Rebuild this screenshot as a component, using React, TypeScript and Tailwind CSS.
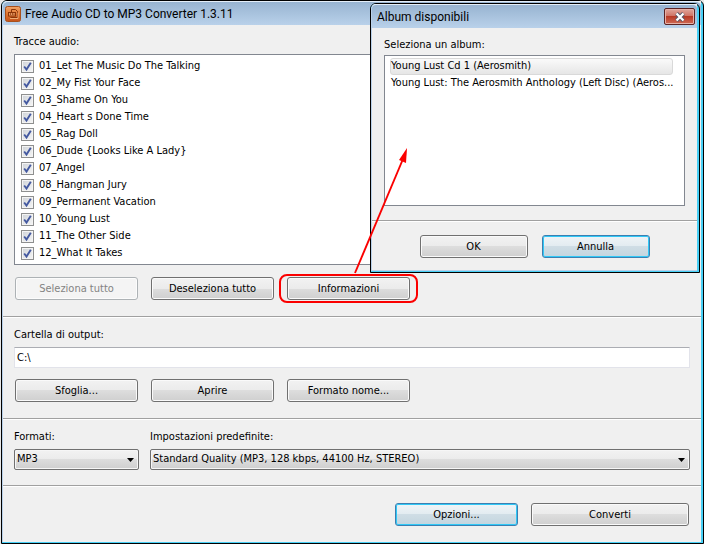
import React from 'react';

const tracks = [
    '01_Let The Music Do The Talking',
    '02_My Fist Your Face',
    '03_Shame On You',
    '04_Heart s Done Time',
    '05_Rag Doll',
    '06_Dude {Looks Like A Lady}',
    '07_Angel',
    '08_Hangman Jury',
    '09_Permanent Vacation',
    '10_Young Lust',
    '11_The Other Side',
    '12_What It Takes',
];

const albums = [
    'Young Lust Cd 1 (Aerosmith)',
    'Young Lust: The Aerosmith Anthology (Left Disc) (Aeros...',
];

interface ButtonProps {
    children: React.ReactNode;
    className: string;
    disabled?: boolean;
    highlighted?: boolean;
}

const Button: React.FC<ButtonProps> = ({ children, className, disabled, highlighted }) => {
    let look = 'border-[#707070] text-black inset-ring inset-ring-[#fafafa] bg-[linear-gradient(#f2f2f2,#ebebeb_50%,#dddddd_50%,#cfcfcf)]';
    if (disabled) look = 'border-[#adb2b5] text-[#838383] inset-ring inset-ring-[#fcfcfc] bg-[#f4f4f4]';
    if (highlighted) look = 'border-[#3c7fb1] text-black inset-ring inset-ring-[#30c8f6] bg-[linear-gradient(#eff4f7,#e2ebf0_50%,#cfdde5_50%,#c3d5df)]';
    return (
        <button type="button" disabled={disabled} className={`h-[23px] rounded-[3px] border text-center leading-4 ${look} ${className}`}>
            {children}
        </button>
    );
};

const Separator = () => <div className="h-[2px] border-t border-[#a0a0a0] bg-white" />;

interface SelectProps {
    id: string;
    label: string;
    option: string;
    className: string;
}

const Select: React.FC<SelectProps> = ({ id, label, option, className }) => (
    <div className={className}>
        <label htmlFor={id} className="block leading-4">{label}</label>
        <div className="relative mt-1">
            <select id={id} className="block h-[21px] w-full appearance-none rounded-[2px] border border-[#707070] bg-[linear-gradient(#f2f2f2,#ebebeb_50%,#dddddd_50%,#cfcfcf)] pr-4 pl-[2px] inset-ring inset-ring-[#f6f6f6]">
                <option>{option}</option>
            </select>
            <svg viewBox="0 0 7 4" className="pointer-events-none absolute top-[9px] right-[5px] h-1 w-[7px]">
                <path d="M0 0h7L3.5 4z" fill="#000" />
            </svg>
        </div>
    </div>
);

const AppIcon = () => (
    <svg viewBox="0 0 16 16" className="size-4">
        <defs>
            <linearGradient id="icon-fill" x1="0" y1="0" x2="0" y2="1">
                <stop offset="0" stopColor="#f3a86c" />
                <stop offset="0.5" stopColor="#df7430" />
                <stop offset="1" stopColor="#c4521a" />
            </linearGradient>
        </defs>
        <rect x="0.5" y="0.5" width="15" height="15" rx="2" fill="url(#icon-fill)" stroke="#a8501c" />
        <path d="M6.500 6V3.500h4l2 2v6h-7" fill="none" stroke="#8a3509" />
        <rect x="3.500" y="6.500" width="7" height="3.500" fill="#e89a62" stroke="#8a3509" />
        <path d="M5.500 7v2M7.500 7v2M9 7.500v1.500" fill="none" stroke="#8a3509" strokeWidth="0.7" />
        <path d="M5 12.500h8v-6" fill="none" stroke="#f8c08a" strokeWidth="0.8" />
    </svg>
);

const TrackRow: React.FC<{ name: string }> = ({ name }) => (
    <li>
        <label className="flex h-[17px] items-center gap-[5px]">
            <span className="relative size-[13px]">
                <input type="checkbox" defaultChecked className="peer block size-[13px] appearance-none border border-[#8e8f8f] bg-[linear-gradient(135deg,#cfd3d8,#f6f6f6)] inset-ring inset-ring-[#f4f4f4]" />
                <svg viewBox="0 0 13 13" className="pointer-events-none absolute inset-0 hidden size-[13px] peer-checked:block">
                    <path d="M3.200 6.500L5.500 9.500L9.800 2.800" fill="none" stroke="#4459a0" strokeWidth="1.9" />
                </svg>
            </span>
            {name}
        </label>
    </li>
);

const AlbumDialog = () => (
    <section role="dialog" aria-labelledby="album-title" className="absolute top-[2px] right-[3px] z-10 w-[330px] rounded-t-md border border-black bg-[#48d0f6]">
        <div className="mr-[2px] mb-px rounded-tl-[5px] border-b border-l border-[#b9d1ea] bg-[#f0f0f0]">
            <header className="flex h-6 items-center justify-between rounded-t-[4px] border-t border-[#e4eef8] bg-linear-to-b from-[#98b4d1] to-[#b9d1ea] pr-[2px] pl-[5px]">
                <h2 id="album-title" className="font-['Roboto',sans-serif] text-[12px] leading-4">Album disponibili</h2>
                <button type="button" aria-label="Chiudi" className="flex h-[17px] w-[31px] items-center justify-center rounded-[2px] border border-[#5c2323] bg-[linear-gradient(#e0a69c,#cf7263_48%,#b83a26_50%,#cf6a55)] inset-ring inset-ring-[#e6b1a7]">
                    <svg viewBox="0 0 12 10" className="h-[10px] w-3">
                        <path d="M2.500 1.500L9.500 8.500M9.500 1.500L2.500 8.500" stroke="#53586a" strokeWidth="4" />
                        <path d="M2.500 1.500L9.500 8.500M9.500 1.500L2.500 8.500" stroke="#fff" strokeWidth="2.300" />
                    </svg>
                </button>
            </header>
            <div className="px-3 pt-[9px] pb-[14px]">
                <p id="album-label" className="leading-4">Seleziona un album:</p>
                <ul role="listbox" aria-labelledby="album-label" className="mt-[2px] h-[151px] border border-[#828790] bg-white py-[2px] pr-[11px] pl-[5px]">
                    {albums.map((album, i) => (
                        <li
                            key={album}
                            role="option"
                            aria-selected={i === 0}
                            className="flex h-[17px] items-center rounded-[3px] border border-transparent whitespace-nowrap aria-selected:border-[#d9d9d9] aria-selected:bg-linear-to-b aria-selected:from-[#fafafa] aria-selected:to-[#e6e6e6]"
                        >
                            {album}
                        </li>
                    ))}
                </ul>
            </div>
            <Separator />
            <footer className="flex justify-center gap-[14px] pt-[13px] pb-3">
                <Button className="w-[108px]">OK</Button>
                <Button className="w-[108px]" highlighted>Annulla</Button>
            </footer>
        </div>
    </section>
);

// Red frame and arrow that lead from the button to the dialog
const Callout = () => (
    <>
        <span className="pointer-events-none absolute -inset-x-2 -inset-y-[3px] rounded-lg border-2 border-[#fb0000]" />
        <svg viewBox="0 0 60 130" className="pointer-events-none absolute bottom-[25px] left-[65px] h-[130px] w-[60px]">
            <path d="M3 128L51 14" stroke="#fb0000" strokeWidth="1.900" />
            <path d="M55 3L47 15L54 18z" fill="#fb0000" />
        </svg>
    </>
);

export default function App() {
    return (
        <div className="min-h-screen bg-[#e8e8e8] pl-px font-['DejaVu_Sans_Condensed','DejaVu_Sans',sans-serif] text-[11px] text-black">
            <main className="relative flex min-h-screen flex-col rounded-t-md border border-black bg-[#48d0f6] pr-[2px] pb-px">
                <div className="flex grow flex-col rounded-tl-[5px] border-l border-[#b9d1ea] bg-[#f0f0f0]">
                    <header className="flex h-6 items-center gap-1 rounded-t-[5px] border-t border-[#e4eef8] bg-linear-to-b from-[#98b4d1] to-[#b9d1ea] pl-[2px]">
                        <AppIcon />
                        <h1 className="font-['Roboto',sans-serif] text-[12px] leading-4">Free Audio CD to MP3 Converter 1.3.11</h1>
                    </header>

                    <section className="px-[11px] pt-[9px] pb-4">
                        <h2 className="leading-4">Tracce audio:</h2>
                        <ul className="mt-1 border border-[#828790] bg-white pt-[3px] pb-[2px] pl-[6px]">
                            {tracks.map(t => <TrackRow key={t} name={t} />)}
                        </ul>
                        <div className="mt-3 flex gap-[13px] pl-px">
                            <Button className="w-[123px]" disabled>Seleziona tutto</Button>
                            <Button className="w-[123px]">Deseleziona tutto</Button>
                            <div className="relative z-20">
                                <Button className="w-[123px]">Informazioni</Button>
                                <Callout />
                            </div>
                        </div>
                    </section>
                    <Separator />

                    <section className="px-[11px] pt-[9px] pb-4">
                        <label htmlFor="output-folder" className="block leading-4">Cartella di output:</label>
                        <input id="output-folder" type="text" defaultValue="C:\" className="mt-1 block h-[21px] w-full border border-[#e2e3ea] border-t-[#abadb3] bg-white px-[2px]" />
                        <div className="mt-[11px] flex gap-[13px] pl-px">
                            <Button className="w-[123px]">Sfoglia...</Button>
                            <Button className="w-[123px]">Aprire</Button>
                            <Button className="w-[123px]">Formato nome...</Button>
                        </div>
                    </section>
                    <Separator />

                    <section className="flex gap-[11px] px-[11px] pt-[9px] pb-[15px]">
                        <Select id="format" label="Formati:" option="MP3" className="w-[125px]" />
                        <Select id="preset" label="Impostazioni predefinite:" option="Standard Quality (MP3, 128 kbps, 44100 Hz, STEREO)" className="grow" />
                    </section>
                    <Separator />

                    <footer className="flex justify-end gap-[13px] px-3 pt-4 pb-4">
                        <Button className="w-[123px]" highlighted>Opzioni...</Button>
                        <Button className="w-[158px]">Converti</Button>
                    </footer>
                </div>
                <AlbumDialog />
            </main>
        </div>
    );
}
